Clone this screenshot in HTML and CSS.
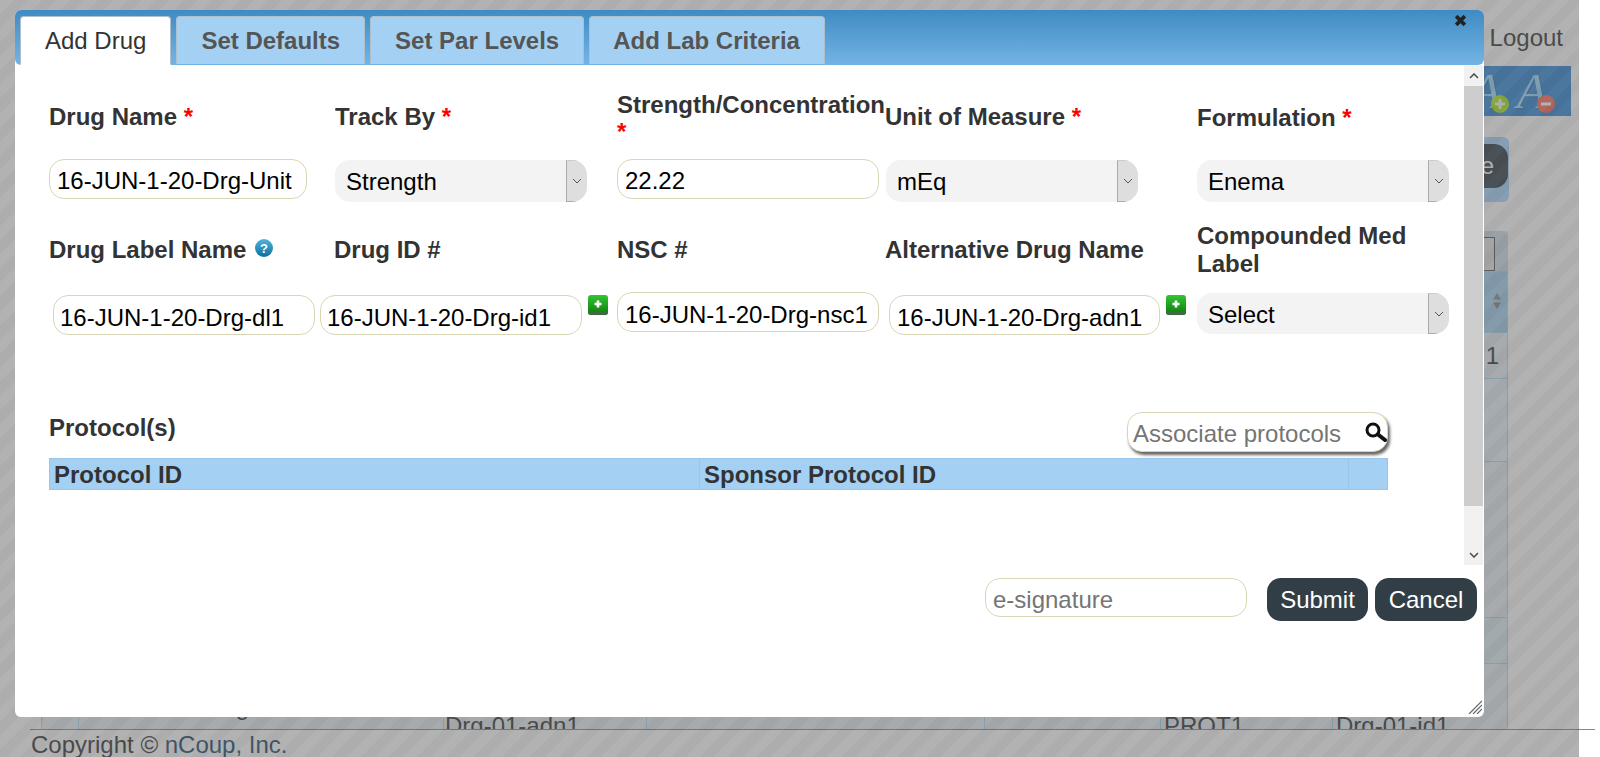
FILE: index.html
```html
<!DOCTYPE html>
<html>
<head>
	<title>Add Drug</title>
	<link rel="stylesheet" href="styles.css">
</head>
<body>
	<div class="page">
		<div class="page-head"><a href="#" class="logout">Logout</a></div>
		<div class="font-bar">
			<div class="font-btn">A
				<svg class="font-badge" viewBox="0 0 18 18"><circle cx="9" cy="9" r="9" fill="#a6ea12"/><path d="M9 4v10M4 9h10" stroke="#fff" stroke-width="3"/></svg>
			</div>
			<div class="font-btn">A
				<svg class="font-badge" viewBox="0 0 18 18"><circle cx="9" cy="9" r="9" fill="#ff6856"/><path d="M4 9h10" stroke="#fff" stroke-width="3"/></svg>
			</div>
		</div>
		<div class="action-wrap"><span class="action-btn">Save</span></div>
		<div class="grid-wrap">
			<div class="grid-filter"><span class="filter-box"></span></div>
			<table class="grid">
				<tr class="grid-head">
					<th class="c1"></th><th class="c2"></th><th class="c3"></th><th class="c4"></th><th class="c5"></th><th class="c6"></th>
					<th class="c7"><svg class="sort-icon" viewBox="0 0 10 16"><path d="M5 0l4 6.500H1zM5 16l4-6.500H1z" fill="#888"/></svg></th>
				</tr>
				<tr class="row-a"><td></td><td></td><td></td><td></td><td></td><td></td><td class="right">1</td></tr>
				<tr class="row-b"><td></td><td></td><td></td><td></td><td></td><td></td><td></td></tr>
				<tr class="row-c"><td></td><td></td><td></td><td></td><td></td><td></td><td></td></tr>
				<tr class="row-d"><td></td><td></td><td></td><td></td><td></td><td></td><td></td></tr>
				<tr class="row-e">
					<td></td><td class="cell-drug">Drug</td><td class="cell-low cell-adn">Drg-01-adn1</td><td></td><td></td>
					<td class="cell-low">PROT1</td><td class="cell-low">Drg-01-id1</td>
				</tr>
			</table>
		</div>
		<div class="page-foot">Copyright &copy; <a href="#" class="foot-link">nCoup, Inc.</a></div>
	</div>

	<div class="overlay"></div>

	<div class="modal">
		<div class="modal-head">
			<a href="#" class="tab active">Add Drug</a>
			<a href="#" class="tab">Set Defaults</a>
			<a href="#" class="tab">Set Par Levels</a>
			<a href="#" class="tab tab-last">Add Lab Criteria</a>
			<svg class="close-icon" viewBox="0 0 12 12"><path d="M2 2l8 8M10 2l-8 8" stroke="#222" stroke-width="3.400"/></svg>
		</div>
		<div class="modal-main">
			<div class="pane">
				<div class="form-grid">
					<label class="field-label">Drug Name&nbsp;<span class="req">*</span></label>
					<label class="field-label">Track By&nbsp;<span class="req">*</span></label>
					<label class="field-label label-tall">Strength/Concentration <span class="req">*</span></label>
					<label class="field-label label-back">Unit of Measure&nbsp;<span class="req">*</span></label>
					<label class="field-label label-mid">Formulation&nbsp;<span class="req">*</span></label>

					<input class="txt w-258" type="text" value="16-JUN-1-20-Drg-Unit">
					<div class="select-box sel-top">
						<select class="sel"><option>Strength</option></select>
						<span class="sel-arrow"><svg viewBox="0 0 10 6" class="sel-chev"><path d="M1 1l4 4 4-4" fill="none" stroke="#555"/></svg></span>
					</div>
					<input class="txt w-262" type="text" value="22.22">
					<div class="select-box sel-top">
						<select class="sel"><option>mEq</option></select>
						<span class="sel-arrow"><svg viewBox="0 0 10 6" class="sel-chev"><path d="M1 1l4 4 4-4" fill="none" stroke="#555"/></svg></span>
					</div>
					<div class="select-box sel-top">
						<select class="sel"><option>Enema</option></select>
						<span class="sel-arrow"><svg viewBox="0 0 10 6" class="sel-chev"><path d="M1 1l4 4 4-4" fill="none" stroke="#555"/></svg></span>
					</div>

					<label class="field-label">Drug Label Name
						<svg class="help-icon" viewBox="0 0 18 18">
							<defs><linearGradient id="helpfill" x1="0" y1="0" x2="0" y2="1"><stop offset="0" stop-color="#4fb4dc"/><stop offset="1" stop-color="#0f6f9f"/></linearGradient></defs>
							<circle cx="9" cy="9" r="9" fill="url(#helpfill)"/>
							<text x="9" y="14" text-anchor="middle" class="help-mark">?</text>
						</svg>
					</label>
					<label class="field-label label-back">Drug ID #</label>
					<label class="field-label">NSC #</label>
					<label class="field-label label-back">Alternative Drug Name</label>
					<label class="field-label">Compounded Med Label</label>

					<input class="txt w-262 dl-input txt-low" type="text" value="16-JUN-1-20-Drg-dl1">
					<div class="with-add id-cell">
						<input class="txt w-262 txt-low" type="text" value="16-JUN-1-20-Drg-id1">
						<svg class="add-icon" viewBox="0 0 20 20"><use href="#addbtn"/></svg>
					</div>
					<input class="txt w-262 txt-nsc" type="text" value="16-JUN-1-20-Drg-nsc1">
					<div class="with-add adn-cell">
						<input class="txt w-271 txt-nsc" type="text" value="16-JUN-1-20-Drg-adn1">
						<svg class="add-icon" viewBox="0 0 20 20"><use href="#addbtn"/></svg>
					</div>
					<div class="select-box sel-low">
						<select class="sel"><option>Select</option></select>
						<span class="sel-arrow"><svg viewBox="0 0 10 6" class="sel-chev"><path d="M1 1l4 4 4-4" fill="none" stroke="#555"/></svg></span>
					</div>
				</div>

				<div class="protocol-head">
					<span class="field-label">Protocol(s)</span>
					<div class="search-box">
						<input class="search-input" type="text" placeholder="Associate protocols">
						<svg class="search-icon" viewBox="0 0 22 20"><circle cx="8" cy="8" r="6" fill="#fff" stroke="#111" stroke-width="3"/><path d="M13 12.500l7 5.500" stroke="#111" stroke-width="4" stroke-linecap="round"/></svg>
					</div>
				</div>
				<table class="protocol-table">
					<tr>
						<th class="p1">Protocol ID</th>
						<th class="p2">Sponsor Protocol ID</th>
						<th class="p3"></th>
					</tr>
				</table>
			</div>
			<div class="scrollbar">
				<span class="scroll-btn"><svg viewBox="0 0 10 6" class="scroll-chev"><path d="M1 5l4-4 4 4" fill="none" stroke="#505050" stroke-width="1.600"/></svg></span>
				<span class="scroll-thumb"></span>
				<span class="scroll-track"></span>
				<span class="scroll-btn"><svg viewBox="0 0 10 6" class="scroll-chev"><path d="M1 1l4 4 4-4" fill="none" stroke="#505050" stroke-width="1.600"/></svg></span>
			</div>
		</div>
		<div class="modal-foot">
			<input class="txt sig" type="text" placeholder="e-signature">
			<div class="foot-btns">
				<button class="btn">Submit</button>
				<button class="btn">Cancel</button>
			</div>
		</div>
		<svg class="grip" viewBox="0 0 14 14"><path d="M1 14L14 1M5 14L14 5M9 14l5-5" stroke="#666" stroke-width="1.200"/></svg>
	</div>

	<svg class="defs-holder" width="0" height="0">
		<defs>
			<linearGradient id="addfill" x1="0" y1="0" x2="0" y2="1"><stop offset="0" stop-color="#35c435"/><stop offset="1" stop-color="#0a7d0a"/></linearGradient>
			<g id="addbtn">
				<rect width="20" height="20" rx="3" fill="url(#addfill)"/>
				<path d="M0 17h20v0a3 3 0 0 1-3 3H3a3 3 0 0 1-3-3z" fill="#3f6b3f"/>
				<path d="M10 5.500v7M6.500 9h7" stroke="#fff" stroke-width="2.600"/>
			</g>
		</defs>
	</svg>
</body>
</html>
```

FILE: styles.css
```css
* {
	box-sizing: border-box;
}
html, body {
	margin: 0;
	height: 100%;
	overflow: hidden;
	background: #fff;
}
body {
	font: 24px "Liberation Sans", Arial, sans-serif;
	color: #333;
}
a {
	text-decoration: none;
}

/* page behind the dialog */
.page {
	height: 757px;
	width: 1595px;
	display: flex;
	flex-direction: column;
}
.page-head {
	height: 66px;
	flex: none;
	display: flex;
	justify-content: flex-end;
	padding: 24px 32px 0 0;
	line-height: 28px;
}
.logout {
	color: #333;
}
.font-bar {
	flex: none;
	height: 50px;
	width: 200px;
	align-self: flex-end;
	margin-right: 24px;
	background: #3088d8;
	display: flex;
	justify-content: flex-end;
	padding-right: 16px;
}
.font-btn {
	position: relative;
	width: 46px;
	height: 50px;
	font: italic 50px/50px "Liberation Serif", serif;
	color: #98d8ff;
	text-shadow: 1px 1px 1px #2a6fa8;
	text-align: center;
}
.font-badge {
	position: absolute;
	right: 0;
	top: 29px;
	width: 18px;
	height: 18px;
}
.action-wrap {
	flex: none;
	height: 65px;
	margin: 21px 86px 0 auto;
	width: 200px;
	background: #a9d8ff;
	border-radius: 6px;
	padding-top: 7px;
	display: flex;
	justify-content: flex-end;
}
.action-btn {
	height: 44px;
	width: 110px;
	margin-right: 1px;
	background: #2e3e48;
	color: #fff;
	border-radius: 14px;
	text-align: right;
	padding-right: 14px;
	line-height: 44px;
}
.grid-wrap {
	flex: 1;
	min-height: 0;
	overflow: hidden;
	margin: 29px 87px 0 41px;
	background: #e8f0f5;
}
.grid-filter {
	height: 40px;
	background: #cfdde8;
	border-radius: 6px 6px 0 0;
	display: flex;
	justify-content: flex-end;
	padding: 6px 13px 0 0;
}
.filter-box {
	width: 120px;
	height: 34px;
	border: 1px solid #555;
	background: #e4e4e4;
}
.grid {
	border-collapse: collapse;
	table-layout: fixed;
	width: 100%;
	color: #333;
}
.grid th, .grid td {
	border: 1px solid #a9d8f5;
	padding: 0 7px;
	vertical-align: top;
	text-align: left;
	font-weight: 400;
	line-height: 27px;
}
.grid-head {
	height: 61px;
	background: #a4d1f3;
}
.grid .c1 {
	width: 37px;
}
.grid .c2 {
	width: 365px;
}
.grid .c3 {
	width: 203px;
}
.grid .c4 {
	width: 338px;
}
.grid .c5 {
	width: 176px;
}
.grid .c6 {
	width: 172px;
}
.sort-icon {
	display: block;
	width: 10px;
	height: 16px;
	margin: 21px 0 0 152px;
}
.row-a {
	height: 46px;
}
.row-a td.right {
	text-align: right;
	padding: 9px 8px 0 0;
}
.row-b {
	height: 83px;
	background: #e6f2fa;
}
.row-c {
	height: 156px;
}
.row-d {
	height: 46px;
	background: #e0edf6;
}
.row-e {
	height: 90px;
}
.grid td.cell-low {
	padding: 48px 0 0 3px;
}
.grid td.cell-adn {
	padding-left: 1px;
}
.grid td.cell-drug {
	padding: 29px 0 0 118px;
}
.page-foot {
	flex: none;
	height: 28px;
	margin-left: 30px;
	border-top: 1px solid #8a8a7a;
	padding-left: 1px;
	line-height: 30px;
	white-space: nowrap;
}
.foot-link {
	color: #1a4a70;
}
.overlay {
	position: absolute;
	left: 0;
	top: 0;
	width: 1579px;
	height: 757px;
	background: repeating-linear-gradient(135deg, rgba(102,102,102,.5) 0, rgba(102,102,102,.5) 10px, rgba(92,92,92,.5) 10px, rgba(92,92,92,.5) 20px);
}

/* dialog */
.modal {
	position: absolute;
	left: 15px;
	top: 10px;
	width: 1469px;
	height: 707px;
	background: #fff;
	border-radius: 6px;
}
.modal-head {
	height: 55px;
	background: linear-gradient(#3f8bc4, #74b4e4);
	border-radius: 6px;
	display: flex;
	align-items: flex-end;
	gap: 5px;
	padding-left: 5px;
	position: relative;
}
.tab {
	height: 49px;
	padding: 0 24px;
	line-height: 48px;
	background: #a4d1f3;
	color: #555;
	font-weight: 700;
	border: 1px solid #aebfcc;
	border-bottom: 1px solid #6fb3e6;
	border-radius: 4px 4px 0 0;
}
.tab-last {
	padding: 0 24px 0 23px;
}
.tab.active {
	background: #fff;
	color: #333;
	font-weight: 400;
	border-bottom-color: #fff;
}
.close-icon {
	position: absolute;
	right: 17px;
	top: 4px;
	width: 13px;
	height: 13px;
}
.modal-main {
	display: flex;
	height: 500px;
	padding-right: 1px;
}
.pane {
	flex: 1;
	padding: 25px 0 0 34px;
	overflow: hidden;
}
.scrollbar {
	flex: none;
	width: 19px;
	display: flex;
	flex-direction: column;
	background: #f1f1f1;
}
.scroll-btn {
	flex: none;
	height: 21px;
	display: flex;
	align-items: center;
	justify-content: center;
}
.scroll-chev {
	width: 10px;
	height: 6px;
}
.scroll-thumb {
	flex: none;
	height: 420px;
	background: #cdcdcd;
}
.scroll-track {
	flex: 1;
}
.form-grid {
	display: grid;
	grid-template-columns: 286px 282px 269px 311px 252px;
	grid-template-rows: 69px 64px 69px 43px;
}
.field-label {
	display: block;
	font-weight: 700;
	line-height: 28px;
	color: #333;
}
.form-grid .field-label {
	display: flex;
	flex-wrap: wrap;
	align-items: center;
	align-content: center;
	height: 53px;
}
.form-grid .label-tall {
	height: 56px;
	line-height: 27px;
}
.form-grid .label-mid {
	height: 55px;
}
.form-grid .label-back {
	margin-left: -1px;
}
.req {
	color: #f00;
}
.help-icon {
	width: 18px;
	height: 18px;
	margin: -4px 0 0 9px;
}
.help-mark {
	font: 700 13px "Liberation Sans", sans-serif;
	fill: #fff;
}
.txt {
	height: 40px;
	border: 1px solid #d8d6b4;
	border-radius: 15px;
	padding: 4px 7px 0;
	font: 24px "Liberation Sans", Arial, sans-serif;
	color: #000;
	background: #fff;
	outline: 0;
}
.txt-low {
	padding: 6px 6px 0;
}
.txt-nsc {
	padding-top: 6px;
}
.w-258 {
	width: 258px;
}
.w-262 {
	width: 262px;
}
.w-271 {
	width: 271px;
}
.dl-input {
	margin: 3px 0 0 4px;
}
.with-add {
	display: flex;
	align-items: flex-start;
	gap: 6px;
	padding-top: 3px;
}
.id-cell {
	margin-left: -15px;
}
.adn-cell {
	margin-left: 3px;
}
.add-icon {
	width: 20px;
	height: 20px;
	flex: none;
}
.defs-holder {
	position: absolute;
}
.select-box {
	width: 252px;
	display: flex;
	background: #f3f3f3;
	border-radius: 15px;
	overflow: hidden;
}
.sel-top {
	height: 42px;
	margin-top: 1px;
}
.sel-low {
	height: 41px;
	margin-top: 1px;
}
.sel {
	flex: 1;
	min-width: 0;
	appearance: none;
	border: 0;
	background: none;
	padding: 2px 0 0 11px;
	font: 24px "Liberation Sans", Arial, sans-serif;
	color: #000;
	outline: 0;
}
.sel-top .sel {
	padding-top: 0;
}
.sel-arrow {
	flex: none;
	width: 21px;
	background: #dedede;
	border-left: 1px solid #aaa;
	border-bottom: 1px solid #aaa;
	border-top: 1px solid #ccc;
	display: flex;
	align-items: center;
	justify-content: center;
}
.sel-chev {
	width: 10px;
	height: 6px;
}
.protocol-head {
	width: 1339px;
	margin-top: 77px;
	height: 40px;
	display: flex;
	justify-content: space-between;
	align-items: center;
}
.protocol-head .field-label {
	margin-bottom: 9px;
}
.search-box {
	width: 261px;
	height: 40px;
	display: flex;
	align-items: center;
	border: 1px solid #d8d6b4;
	border-radius: 15px;
	box-shadow: 2px 3px 3px #666;
	padding: 0 0 0 5px;
	background: #fff;
}
.search-input {
	flex: 1;
	min-width: 0;
	border: 0;
	outline: 0;
	padding: 4px 0 0;
	background: none;
	font: 24px "Liberation Sans", Arial, sans-serif;
}
.search-icon {
	width: 22px;
	height: 20px;
	flex: none;
}
.protocol-table {
	width: 1339px;
	height: 32px;
	margin-top: 6px;
	border-collapse: collapse;
	table-layout: fixed;
}
.protocol-table th {
	background: #a4d1f3;
	border: 1px solid #97c6ea;
	font-weight: 700;
	color: #333;
	text-align: left;
	padding: 2px 4px 0;
	line-height: 26px;
}
.p1 {
	width: 650px;
}
.p3 {
	width: 39px;
}
.modal-foot {
	display: flex;
	justify-content: flex-end;
	align-items: flex-start;
	gap: 20px;
	padding: 13px 7px 0 0;
}
.sig {
	width: 262px;
	height: 39px;
}
.foot-btns {
	display: flex;
	gap: 7px;
}
.btn {
	width: 102px;
	height: 43px;
	border: 0;
	border-radius: 14px;
	background: #323e46;
	color: #fff;
	font: 24px "Liberation Sans", Arial, sans-serif;
	padding: 0;
}
.btn:first-child {
	width: 101px;
}
.grip {
	position: absolute;
	right: 2px;
	bottom: 3px;
	width: 14px;
	height: 14px;
}
```
